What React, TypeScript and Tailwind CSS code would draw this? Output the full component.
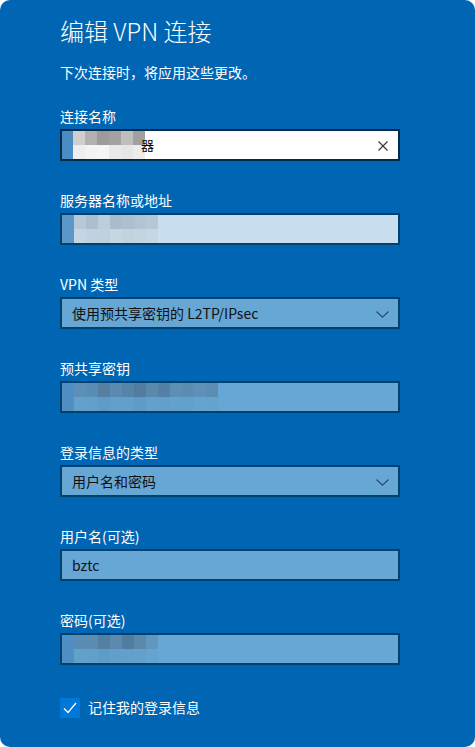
import React from "react";

const font = {
  fontFamily: '"Noto Sans CJK SC", "Noto Sans", sans-serif',
};

function Blur({ top, bottom, className = "" }: { top: string[]; bottom: string[]; className?: string }) {
  return (
    <div className={`flex flex-col ${className}`}>
      <div className="flex">
        {top.map((c, i) => (
          <div key={i} className={`w-3 h-[14px] ${c}`} />
        ))}
      </div>
      <div className="flex">
        {bottom.map((c, i) => (
          <div key={i} className={`w-3 h-[14px] ${c}`} />
        ))}
      </div>
    </div>
  );
}

function Label({ children }: { children: React.ReactNode }) {
  return <div className="h-5 leading-5 text-[14px] text-white">{children}</div>;
}

function Chevron() {
  return (
    <svg width="13" height="7" viewBox="0 0 13 7" className="absolute right-[9px] top-[12px]">
      <path d="M0.5 0.5 L6.5 6.2 L12.5 0.5" fill="none" stroke="#2a4a66" strokeWidth="1.1" />
    </svg>
  );
}

export default function App() {
  return (
    <div className="w-[475px] h-[747px] bg-white" style={font}>
      <div className="w-full h-full bg-[#0066b4] rounded-[10px] pl-[60px] pr-[75px] flex flex-col">
        {/* Header */}
        <h1 className="mt-[15px] h-8 leading-8 text-[24px] font-light text-white">编辑 VPN 连接</h1>
        <p className="mt-[15px] h-5 leading-5 text-[14px] text-white">下次连接时，将应用这些更改。</p>

        {/* 连接名称 */}
        <div className="mt-[24px]">
          <Label>连接名称</Label>
          <div className="mt-[3px] h-8 bg-white border-2 border-[#002c4c] relative flex items-center overflow-hidden">
            <Blur
              className="-ml-px"
              top={["bg-[#4a8cc4]", "bg-[#cfcfcf]", "bg-[#b1b1b1]", "bg-[#9c9c9c]", "bg-[#a3a3a3]", "bg-[#bebebe]", "bg-[#a0a0a0]"]}
              bottom={["bg-[#4a8cc4]", "bg-[#eeeeee]", "bg-[#f3f3f3]", "bg-[#f5f5f5]", "bg-[#e9e9e9]", "bg-[#e6e6e6]", "bg-[#ececec]"]}
            />
            <span className="text-[13px] text-black -ml-[4px]">器</span>
            <svg width="10" height="10" viewBox="0 0 10 10" className="absolute right-[10px] top-[10px]">
              <path d="M0.5 0.5 L9.5 9.5 M9.5 0.5 L0.5 9.5" stroke="#333" strokeWidth="1.1" />
            </svg>
          </div>
        </div>

        {/* 服务器名称或地址 */}
        <div className="mt-[29px]">
          <Label>服务器名称或地址</Label>
          <div className="mt-[3px] h-8 bg-[#c9deef] border-2 border-[#00426f] flex items-center overflow-hidden">
            <Blur
              top={["bg-[#5b97c8]", "bg-[#b7c9d8]", "bg-[#adbfcf]", "bg-[#bccddb]", "bg-[#a9bccc]", "bg-[#aec0cf]", "bg-[#b2c4d3]", "bg-[#b6c7d6]"]}
              bottom={["bg-[#5b97c8]", "bg-[#c4d5e3]", "bg-[#c0d1df]", "bg-[#bfd0de]", "bg-[#c6d6e3]", "bg-[#c2d3e0]", "bg-[#c4d4e1]", "bg-[#c6d6e3]"]}
            />
          </div>
        </div>

        {/* VPN 类型 */}
        <div className="mt-[29px]">
          <Label>VPN 类型</Label>
          <div className="mt-[3px] h-8 bg-[#67a7d5] border-2 border-[#00426f] relative flex items-center pl-[10px] text-[14px] text-[#111]">
            使用预共享密钥的 L2TP/IPsec
            <Chevron />
          </div>
        </div>

        {/* 预共享密钥 */}
        <div className="mt-[29px]">
          <Label>预共享密钥</Label>
          <div className="mt-[3px] h-8 bg-[#67a7d5] border-2 border-[#00426f] flex items-center overflow-hidden">
            <Blur
              top={["bg-[#4f8fc4]", "bg-[#5b8fb6]", "bg-[#5a8db4]", "bg-[#557fa0]", "bg-[#5a8aaf]", "bg-[#5484a9]", "bg-[#4f7c9f]", "bg-[#5989ad]", "bg-[#5381a5]", "bg-[#5d8fb5]", "bg-[#5b8cb2]", "bg-[#5e91b8]", "bg-[#5c8eb4]"]}
              bottom={["bg-[#4f8fc4]", "bg-[#63a0cc]", "bg-[#62a0cc]", "bg-[#5f9bc7]", "bg-[#62a0cc]", "bg-[#629fcb]", "bg-[#5f9bc6]", "bg-[#63a1cd]", "bg-[#62a0cb]", "bg-[#64a2ce]", "bg-[#63a1cd]", "bg-[#65a4d0]", "bg-[#64a3cf]"]}
            />
          </div>
        </div>

        {/* 登录信息的类型 */}
        <div className="mt-[29px]">
          <Label>登录信息的类型</Label>
          <div className="mt-[3px] h-8 bg-[#67a7d5] border-2 border-[#00426f] relative flex items-center pl-[10px] text-[14px] text-[#111]">
            用户名和密码
            <Chevron />
          </div>
        </div>

        {/* 用户名 */}
        <div className="mt-[29px]">
          <Label>用户名(可选)</Label>
          <div className="mt-[3px] h-8 bg-[#67a7d5] border-2 border-[#00426f] flex items-center pl-[10px] text-[14px] text-[#111]">
            bztc
          </div>
        </div>

        {/* 密码 */}
        <div className="mt-[29px]">
          <Label>密码(可选)</Label>
          <div className="mt-[3px] h-8 bg-[#67a7d5] border-2 border-[#00426f] flex items-center overflow-hidden">
            <Blur
              top={["bg-[#4f8fc4]", "bg-[#5a8db4]", "bg-[#5b8db3]", "bg-[#557fa0]", "bg-[#5a8aaf]", "bg-[#4f7c9f]", "bg-[#5989ad]", "bg-[#6196bf]"]}
              bottom={["bg-[#4f8fc4]", "bg-[#63a0cc]", "bg-[#62a0cc]", "bg-[#5f9bc7]", "bg-[#62a0cc]", "bg-[#629fcb]", "bg-[#63a1cd]", "bg-[#65a4d0]"]}
            />
          </div>
        </div>

        {/* 记住我的登录信息 */}
        <div className="mt-[33px] flex items-center gap-2">
          <div className="w-5 h-5 bg-[#0078d7] flex items-center justify-center">
            <svg width="14" height="12" viewBox="0 0 14 12">
              <path d="M1 6.5 L5 10.5 L13 1" fill="none" stroke="white" strokeWidth="1.3" />
            </svg>
          </div>
          <span className="text-[14px] text-white leading-5 -mt-[2px]">记住我的登录信息</span>
        </div>
      </div>
    </div>
  );
}
